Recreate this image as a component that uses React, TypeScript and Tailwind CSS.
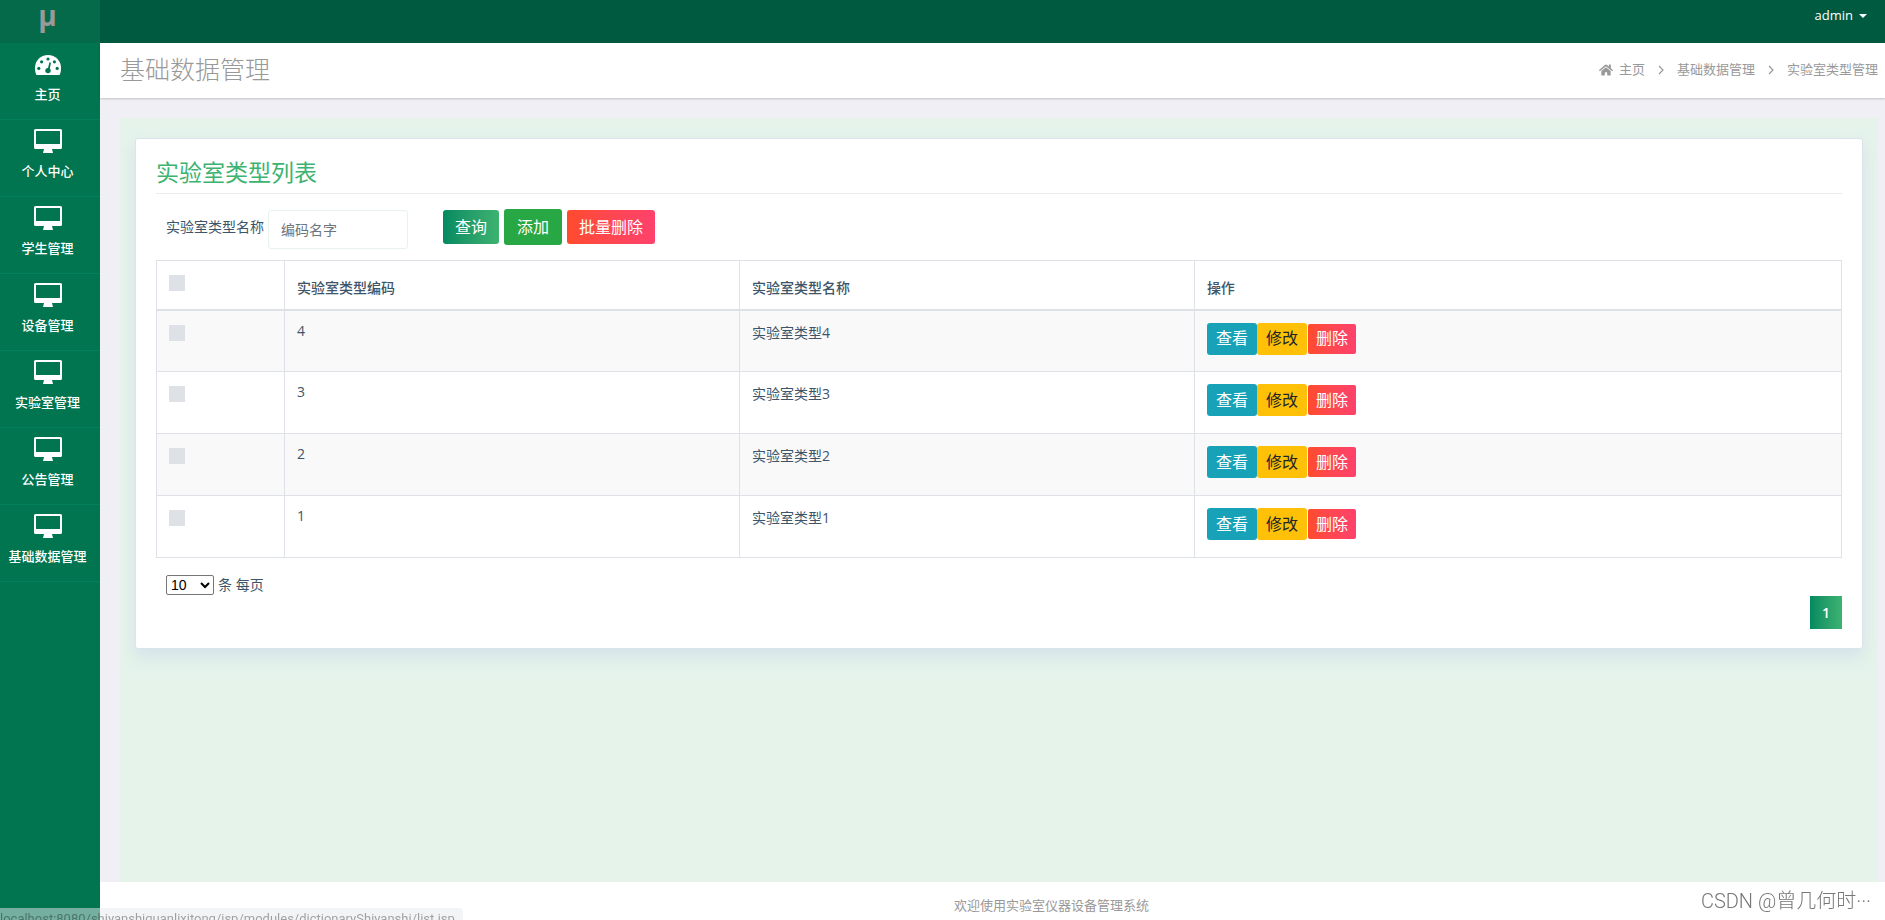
import { useState } from "react";
import { FaHome } from "react-icons/fa";

const menus = ["主页", "个人中心", "学生管理", "设备管理", "实验室管理", "公告管理", "基础数据管理"]

const rows = [
    { code: "4", name: "实验室类型4" },
    { code: "3", name: "实验室类型3" },
    { code: "2", name: "实验室类型2" },
    { code: "1", name: "实验室类型1" },
]

function GaugeIcon() {
    return (
        <svg width="28" height="20" viewBox="0 0 28 20" className="block" aria-hidden="true">
            <path fill="#fff" d="M14 0C6.500 0 1 5.600 1 13c0 2.400.3 4.600 1.200 6.400.3.400.6.600 1 .600h21.600c.4 0 .7-.2 1-.600C26.700 17.600 27 15.400 27 13 27 5.600 21.500 0 14 0z" />
            <g fill="#007550">
                <circle cx="4.800" cy="13.400" r="1.600" />
                <circle cx="7.600" cy="6.800" r="1.600" />
                <circle cx="14" cy="4" r="1.600" />
                <circle cx="20.400" cy="6.800" r="1.600" />
                <circle cx="23.200" cy="13.400" r="1.600" />
                <circle cx="14" cy="15.600" r="2.700" />
                <path d="M15.400 7.300l1.500.4-1.500 8.300-2-.4z" />
            </g>
        </svg>
    )
}

function MonitorIcon() {
    return (
        <svg width="28" height="24" viewBox="0 0 28 24" className="block" aria-hidden="true">
            <path fill="#fff" fillRule="evenodd" d="M1.500 0h25A1.500 1.500 0 0 1 28 1.500v17a1.500 1.500 0 0 1-1.500 1.500H18l1 4H9l1-4H1.500A1.500 1.500 0 0 1 0 18.500v-17A1.500 1.500 0 0 1 1.500 0zM2 2v13h24V2z" />
        </svg>
    )
}

function Chevron() {
    return (
        <svg width="6" height="10" viewBox="0 0 6 10" className="mx-[13px]" aria-hidden="true">
            <path d="M1 1l4 4-4 4" fill="none" stroke="#999" strokeWidth="1.200" />
        </svg>
    )
}

function Sidebar() {
    return (
        <aside className="w-[100px] shrink-0 bg-[#007550]">
            <a href="#" className="flex h-[43px] justify-center bg-[#046a4a] pr-[5px] font-['Open_Sans'] text-[28px] leading-[30px] font-bold text-[#999]">μ</a>
            <nav>
                {menus.map((name, i) => (
                    <a key={name} href="#" className="flex h-[77px] flex-col items-center border-b border-[#018159] pt-2 pr-[5px] text-[13px] leading-5 font-medium text-white">
                        <span className="mb-2 flex h-[25px] items-end">
                            {i === 0 ? <span className="pb-px"><GaugeIcon /></span> : <MonitorIcon />}
                        </span>
                        {name}
                    </a>
                ))}
            </nav>
        </aside>
    )
}

function CheckBox({ label }: { label: string }) {
    return <input type="checkbox" aria-label={label} className="block size-4 appearance-none bg-[#dee2e6] checked:bg-[#3cb371]" />
}

export default function App() {
    const [keyword, setKeyword] = useState<string>("")
    const [pageSize, setPageSize] = useState<string>("10")

    return (
        <div className="flex min-h-screen bg-[#efeff5] font-['Open_Sans','Noto_Sans_CJK_SC',sans-serif] text-[14px] text-[#3e5569]">
            <Sidebar />

            <div className="flex min-w-0 flex-1 flex-col">
                <header className="flex h-[43px] justify-end bg-[#005a3f] pr-[18px]">
                    <button className="flex h-[31px] items-center gap-[6px] text-[13px] font-medium text-white">
                        admin
                        <span className="border-x-4 border-t-4 border-x-transparent border-t-white" />
                    </button>
                </header>

                <div className="flex h-[55px] items-center justify-between bg-white pr-[7px] pb-px pl-5 text-[#999] shadow-[0_1px_2px_rgba(0,0,0,0.2)]">
                    <h1 className="text-[25px] font-light">基础数据管理</h1>
                    <nav className="flex items-center text-[13px]">
                        <FaHome className="mr-[6px] size-[14px]" />
                        <a href="#">主页</a>
                        <Chevron />
                        <a href="#">基础数据管理</a>
                        <Chevron />
                        <span>实验室类型管理</span>
                    </nav>
                </div>

                <main className="mt-5 mr-[7px] ml-5 flex-1 overflow-hidden bg-[#e5f3eb] px-[15px] pt-5">
                    <section className="rounded-[3px] border border-[#dbe4ec] bg-white px-5 pt-[17px] pb-[19px] shadow-[0_8px_16px_rgba(204,213,232,0.6)]">
                        <h2 className="border-b border-[#e9ecef] pb-[5px] text-[23px] leading-8 text-[#3cb371]">实验室类型列表</h2>

                        <form className="mt-[15px] flex items-start pl-[10px]" onSubmit={(e) => e.preventDefault()}>
                            <label htmlFor="keyword" className="mr-1 leading-9">实验室类型名称</label>
                            <input
                                id="keyword"
                                type="text"
                                value={keyword}
                                onChange={(e) => setKeyword(e.target.value)}
                                placeholder="编码名字"
                                className="mt-px mr-[35px] h-[39px] w-[140px] rounded-[3px] border border-[#e5f3eb] px-3 pb-px placeholder:text-[#6c757d]"
                            />
                            <div className="flex items-center gap-[5px] text-[16px] text-white">
                                <button className="h-[34px] rounded-[3px] bg-linear-to-r from-[#018a61] to-[#3cb371] px-3 pb-px">查询</button>
                                <button className="h-9 rounded-[3px] bg-[#28a745] px-[13px] pb-px">添加</button>
                                <button className="h-[34px] rounded-[3px] bg-linear-to-r from-[#ff4b2b] to-[#ff416c] px-3 pb-px">批量删除</button>
                            </div>
                        </form>

                        <table className="mt-[11px] w-full table-fixed border-collapse border border-[#dee2e6] text-left [&_td]:border [&_td]:border-[#dee2e6] [&_th]:border [&_th]:border-[#dee2e6]">
                            <colgroup>
                                <col className="w-32" />
                                <col className="w-[27%]" />
                                <col className="w-[27%]" />
                                <col />
                            </colgroup>
                            <thead>
                                <tr className="h-[49px] border-b-2 border-[#dee2e6]">
                                    <th className="px-3 pt-[14px] align-top"><CheckBox label="全选" /></th>
                                    <th className="px-3 pt-[5px] font-medium">实验室类型编码</th>
                                    <th className="px-3 pt-[5px] font-medium">实验室类型名称</th>
                                    <th className="px-3 pt-[5px] font-medium">操作</th>
                                </tr>
                            </thead>
                            <tbody>
                                {rows.map((row) => (
                                    <tr key={row.code} className="h-[62px] align-top odd:bg-[#f9f9f9]">
                                        <td className="px-3 pt-[14px]"><CheckBox label={row.name} /></td>
                                        <td className="px-3 pt-[10px] leading-5">{row.code}</td>
                                        <td className="px-3 pt-[12px] leading-5">{row.name}</td>
                                        <td className="px-3 pt-[12px]">
                                            <div className="flex items-center text-[16px] text-white">
                                                <button className="h-8 rounded-[3px] bg-[#17a2b8] px-[9px] pb-px">查看</button>
                                                <button className="h-8 rounded-[3px] bg-[#ffc107] px-[9px] pb-px text-[#212529]">修改</button>
                                                <button className="ml-px h-[30px] rounded-[2px] bg-linear-to-r from-[#ff4b2b] to-[#ff416c] px-2 pb-px">删除</button>
                                            </div>
                                        </td>
                                    </tr>
                                ))}
                            </tbody>
                        </table>

                        <div className="mt-[17px] flex items-center gap-1 pl-[10px] leading-5">
                            <select
                                id="page-size"
                                value={pageSize}
                                onChange={(e) => setPageSize(e.target.value)}
                                className="h-5 w-12 rounded-[2px] border border-[#767676] bg-white font-['Liberation_Sans',sans-serif] text-[14px] leading-4 text-black"
                            >
                                <option>10</option>
                                <option>25</option>
                                <option>50</option>
                            </select>
                            <label htmlFor="page-size">条 每页</label>
                        </div>
                        <div className="flex justify-end">
                            <button className="mt-px h-[33px] w-8 bg-linear-to-r from-[#018a61] to-[#3cb371] font-semibold text-white">1</button>
                        </div>
                    </section>
                </main>

                <footer className="flex h-[38px] items-center justify-center bg-white pt-[10px] pl-[118px] text-[13px] text-[#999]">
                    欢迎使用实验室仪器设备管理系统
                </footer>
            </div>

            <div className="fixed right-[14px] bottom-1 font-[Roboto,'Noto_Sans_CJK_SC',sans-serif] text-[20px] leading-[30px] font-light text-[#777]">CSDN @曾几何时···</div>
            <div className="fixed bottom-0 left-0 h-3 overflow-hidden rounded-tr-[4px] bg-[#e8eaed]/50 pr-2 font-[Roboto,sans-serif] text-[13px] leading-[22px] text-black/35">
                localhost:8080/shiyanshiguanlixitong/jsp/modules/dictionaryShiyanshi/list.jsp
            </div>
        </div>
    )
}
